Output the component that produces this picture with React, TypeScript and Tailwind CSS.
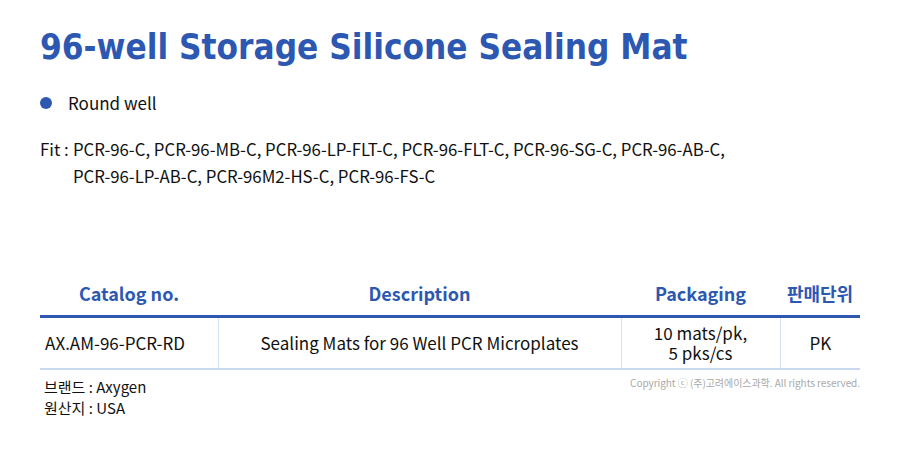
const font = "font-['Noto_Sans_CJK_KR','Noto_Sans',sans-serif]";

export default function App() {
  return (
    <div className={`w-[900px] h-[462px] bg-white text-[#111] ${font}`}>
      <div className="px-10 pt-[22px]">
        {/* Title */}
        <h1 className="text-[34.8px] font-bold leading-[50px] text-[#2d58b2] font-['DejaVu_Sans_Condensed','DejaVu_Sans',sans-serif]">
          96-well Storage Silicone Sealing Mat
        </h1>

        {/* Feature */}
        <div className="mt-[19px] flex items-center gap-[16px] text-[17px] leading-[24px]">
          <span className="h-[12px] w-[12px] rounded-full bg-[#2d58b2]" />
          <span>Round well</span>
        </div>

        {/* Fit */}
        <div className="mt-[21px] flex text-[16.8px] leading-[27px]">
          <span className="w-[33px] shrink-0">Fit :</span>
          <p>
            PCR-96-C, PCR-96-MB-C, PCR-96-LP-FLT-C, PCR-96-FLT-C, PCR-96-SG-C, PCR-96-AB-C,
            <br />
            PCR-96-LP-AB-C, PCR-96M2-HS-C, PCR-96-FS-C
          </p>
        </div>

        {/* Table */}
        <table className="mt-[84px] w-[820px] border-collapse text-[17px]">
          <thead>
            <tr className="border-b-[3px] border-[#2d58b2] text-[#2d58b2] text-[18px] font-bold">
              <th className="h-[42px] w-[178px] pb-[1px] text-center font-bold">Catalog no.</th>
              <th className="w-[403px] pb-[1px] text-center font-bold">Description</th>
              <th className="w-[159px] pb-[1px] text-center font-bold">Packaging</th>
              <th className="w-[80px] pb-[1px] text-center font-bold">판매단위</th>
            </tr>
          </thead>
          <tbody>
            <tr className="border-b-[2px] border-[#c9d9f0]">
              <td className="h-[53px] pl-[5px] text-left">AX.AM-96-PCR-RD</td>
              <td className="border-l border-[#d5e2f4] text-center">Sealing Mats for 96 Well PCR Microplates</td>
              <td className="border-l border-[#d5e2f4] text-center leading-[20px]">
                10 mats/pk,
                <br />5 pks/cs
              </td>
              <td className="border-l border-[#d5e2f4] text-center">PK</td>
            </tr>
          </tbody>
        </table>

        {/* Footer */}
        <div className="flex w-[820px] items-start justify-between">
          <div className="pt-[6px] pl-[4px] text-[15px] leading-[21px]">
            <p>브랜드 : Axygen</p>
            <p>원산지 : USA</p>
          </div>
          <p className="pt-[5px] text-[10px] tracking-[-0.05px] text-[#a9a9a9]">
            Copyright ⓒ (주)고려에이스과학. All rights reserved.
          </p>
        </div>
      </div>
    </div>
  );
}
